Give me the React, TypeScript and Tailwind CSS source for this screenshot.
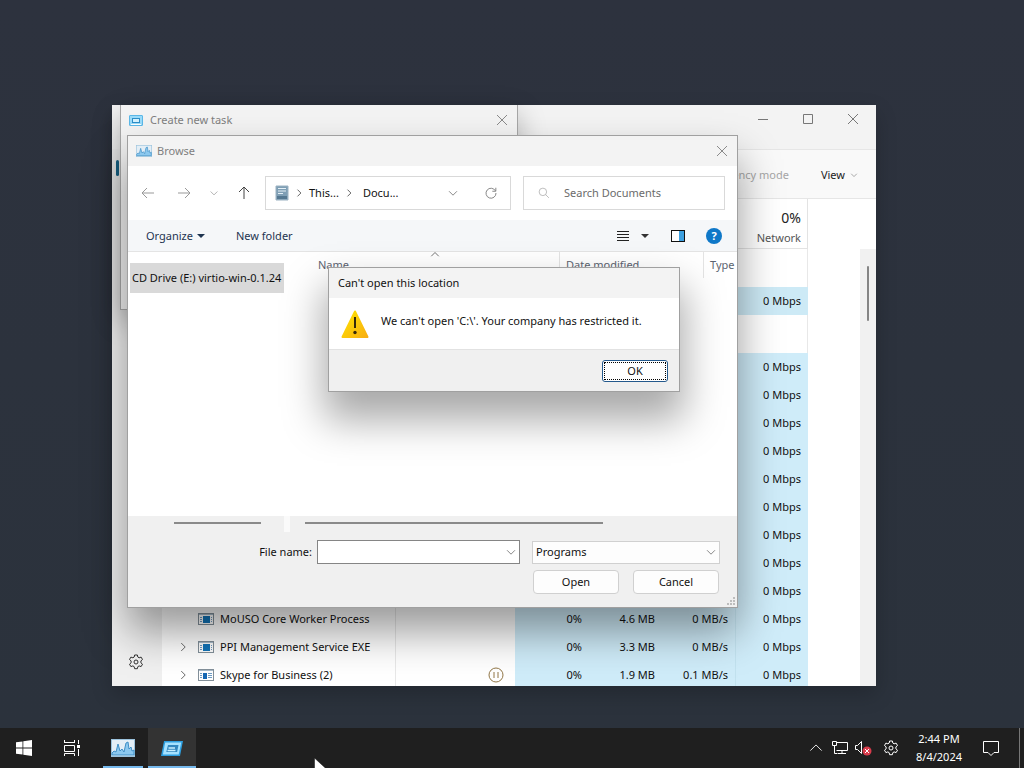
import { ReactNode } from "react";

type Process = {
  name?: string;
  expandable?: boolean;
  small?: boolean;
  paused?: boolean;
  cpu?: string;
  memory?: string;
  disk?: string;
};

const processes: Process[] = [
  {},
  {},
  {},
  {},
  {},
  {},
  {},
  {},
  {},
  { name: "MoUSO Core Worker Process", cpu: "0%", memory: "4.6 MB", disk: "0 MB/s" },
  {
    name: "PPI Management Service EXE",
    expandable: true,
    cpu: "0%",
    memory: "3.3 MB",
    disk: "0 MB/s",
  },
  {
    name: "Skype for Business (2)",
    expandable: true,
    small: true,
    paused: true,
    cpu: "0%",
    memory: "1.9 MB",
    disk: "0.1 MB/s",
  },
];

function Icon({
  d,
  className = "",
  size = 16,
}: {
  d: string;
  className?: string;
  size?: number;
}) {
  return (
    <svg
      width={size}
      height={size}
      viewBox="0 0 16 16"
      fill="none"
      stroke="currentColor"
      className={`shrink-0 ${className}`}
      aria-hidden="true"
    >
      <path d={d} />
    </svg>
  );
}

const closePath = "M3 3l10 10M13 3L3 13";
const downPath = "M3.500 6l4.500 4.500L12.500 6";
const rightPath = "M6 3.500l4.500 4.500L6 12.500";

function GearIcon({ size = 16 }: { size?: number }) {
  return (
    <svg width={size} height={size} viewBox="0 0 16 16" fill="none" stroke="currentColor" aria-hidden="true">
      <path
        d="M6.6 1h2.8l.4 2 1.3.8 2-.7 1.4 2.4-1.6 1.4v1.9l1.6 1.4-1.4 2.4-2-.7-1.3.8-.4 2H6.6l-.4-2-1.3-.8-2 .7-1.4-2.4 1.6-1.4V6.900L1.500 5.500l1.400-2.400 2 .7 1.300-.8z"
        strokeLinejoin="round"
      />
      <circle cx="8" cy="8" r="2" />
    </svg>
  );
}

function RunIcon() {
  return (
    <svg width="22" height="15" viewBox="0 0 22 15" aria-hidden="true">
      <path d="M3 0h19l-3 15H0z" fill="#2d9fe0" />
      <path d="M4.200 1.500h16l-2.500 12H1.900z" fill="#a5e2ff" />
      <path d="M7 4h10.500l-1.400 7H5.300z" fill="#3187bf" />
      <path d="M7.500 7h6.500M6.500 9.500h8" stroke="#c9f0ff" strokeWidth="1.500" />
    </svg>
  );
}

function RunWindowIcon() {
  return (
    <svg width="14" height="11" viewBox="0 0 14 11" aria-hidden="true">
      <rect x=".5" y=".5" width="13" height="10" rx=".5" fill="#9bdcfa" stroke="#5bb8e8" />
      <rect x="3.500" y="3.500" width="7" height="4" fill="#d5f2ff" stroke="#2d8fc8" />
      <path d="M2 9.500h10" stroke="#fff" />
    </svg>
  );
}

function GraphIcon({ width = 16, height = 12 }: { width?: number; height?: number }) {
  return (
    <svg width={width} height={height} viewBox="0 0 24 18" preserveAspectRatio="none" aria-hidden="true">
      <rect x=".5" y=".5" width="23" height="17" fill="#e3eef6" stroke="#9cc3dd" />
      <path
        d="M1 14l2-2 2 1 2-8 2 7 2-2 2 3 2-9 2-1 1 7 2-2 1 4 2-1v5H1z"
        fill="#8cc8ee"
        stroke="#3f8fc6"
      />
    </svg>
  );
}

function ProcessIcon({ small }: { small?: boolean }) {
  return (
    <svg width="16" height="12" viewBox="0 0 16 12" className="shrink-0" aria-hidden="true">
      <rect x=".5" y=".5" width="15" height="11" fill="#fff" stroke="#83909a" />
      <path d="M1 1.500h14" stroke="#a9bccb" />
      {small ? (
        <path d="M5 4h4v6H5z" fill="#1668b4" />
      ) : (
        <path d="M5 3h7v7H5z" fill="#1274b8" />
      )}
      <path d="M2 4.500h2M2 6.500h2M2 8.500h2" stroke="#6e9cc4" />
      <path d={small ? "M10 4.500h4M10 6.500h4M10 8.500h4" : "M13 4.500h1M13 6.500h1M13 8.500h1"} stroke="#6e9cc4" />
    </svg>
  );
}

function TitleBar({ icon, title }: { icon: ReactNode; title: string }) {
  return (
    <header className="flex h-[30px] shrink-0 items-center bg-[#f3f3f3] pr-[7px] pl-2 text-[#7f7f7f]">
      {icon}
      <h2 className="pl-[5px]">{title}</h2>
      <button aria-label={`Close ${title}`} className="ml-auto text-[#8a8a8a]">
        <Icon d={closePath} />
      </button>
    </header>
  );
}

function TaskManager() {
  return (
    <section
      aria-label="Task Manager"
      className="absolute top-[105px] left-[112px] flex h-[581px] w-[764px] flex-col overflow-hidden bg-[#f3f3f3] shadow-[0_8px_20px_rgba(0,0,0,0.2)]"
    >
      <header className="flex h-11 shrink-0 items-start justify-end gap-[29px] pt-[6px] pr-[15px] text-[#777]">
        <button aria-label="Minimize">
          <Icon d="M3 8.500h10" />
        </button>
        <button aria-label="Maximize">
          <Icon d="M3.500 3.500h9v9h-9z" />
        </button>
        <button aria-label="Close">
          <Icon d={closePath} />
        </button>
      </header>
      <div className="flex min-h-0 flex-1">
        <nav className="relative flex w-[50px] shrink-0 flex-col bg-[#f0f0f0] pt-[11px] pb-4">
          <span className="ml-1 h-4 w-[3px] rounded bg-[#17658a]" />
          <button aria-label="Settings" className="mt-auto ml-4 w-4 text-[#333]">
            <GearIcon />
          </button>
        </nav>
        <div className="flex min-w-0 flex-1 flex-col bg-white">
          <div className="flex h-[50px] shrink-0 items-center justify-end gap-8 border-y border-[#e6e6e6] bg-[#f9f9f9] pt-[2px] pr-[17px]">
            <button disabled className="text-[#a6a6a6]">
              Efficiency mode
            </button>
            <button className="flex items-center gap-1 text-[#222]">
              View
              <Icon d={downPath} size={10} className="text-[#777]" />
            </button>
          </div>
          <div className="flex min-h-0 flex-1 overflow-hidden">
            <table className="w-[646px] table-fixed border-separate border-spacing-0 self-start text-right">
              <colgroup>
                <col className="w-[234px]" />
                <col className="w-[119px]" />
                <col className="w-[74px]" />
                <col className="w-[73px]" />
                <col className="w-[73px]" />
                <col className="w-[73px]" />
              </colgroup>
              <thead>
                <tr className="h-[50px]">
                  <td colSpan={5} className="border-b border-[#e3e3e3]" />
                  <th className="border-r border-b border-[#e3e3e3] pt-2 pr-[6px] pb-0 font-normal">
                    <div className="text-sm leading-5 text-[#222]">0%</div>
                    <div className="leading-5 text-[#555]">Network</div>
                  </th>
                </tr>
              </thead>
              <tbody>
                <tr className="h-[38px]">
                  <td colSpan={5} />
                  <td className="border-r border-[#e8e8e8]" />
                </tr>
                <tr className="h-7">
                  <td colSpan={2} />
                  <td colSpan={3} className="bg-[#cdeaf6]" />
                  <td className="bg-[#cdeaf6] pr-[7px]">0 Mbps</td>
                </tr>
                <tr className="h-[38px]">
                  <td colSpan={5} />
                  <td className="border-r border-[#e8e8e8]" />
                </tr>
                {processes.map((process, i) => (
                  <tr key={i} className="h-7">
                    <td className="border-r border-[#e8e8e8] pl-[14px] text-left">
                      <span className="flex items-center">
                        <Icon
                          d={rightPath}
                          size={14}
                          className={process.expandable ? "text-[#555]" : "invisible"}
                        />
                        <span className="flex items-center gap-[6px] pl-2">
                          <ProcessIcon small={process.small} />
                          {process.name}
                        </span>
                      </span>
                    </td>
                    <td className="pr-[11px]">
                      {process.paused && (
                        <svg width="16" height="16" viewBox="0 0 16 16" fill="none" stroke="#927747" className="ml-auto" aria-label="Suspended">
                          <circle cx="8" cy="8" r="7" />
                          <path d="M6 5v6M10 5v6" />
                        </svg>
                      )}
                    </td>
                    <td className="bg-[#cfecf9] pr-[7px]">{process.cpu}</td>
                    <td className="bg-[#cfecf9] pr-[7px]">{process.memory}</td>
                    <td className="bg-[#cfecf9] pr-[7px]">{process.disk}</td>
                    <td className="border-l border-[#c2e2ef] bg-[#cfecf9] pr-[7px]">0 Mbps</td>
                  </tr>
                ))}
              </tbody>
            </table>
            <div className="mt-[50px] ml-auto w-4 bg-[#f1f1f1] pt-[17px]">
              <div className="ml-[7px] h-[55px] w-[2px] rounded bg-[#858585]" />
            </div>
          </div>
        </div>
      </div>
    </section>
  );
}

function CreateTask() {
  return (
    <section
      aria-label="Create new task"
      className="absolute top-[105px] left-[120px] h-[205px] w-[398px] border border-t-0 border-[#a6a6a6] bg-[#f0f0f0] shadow-[0_10px_26px_rgba(0,0,0,0.28)]"
    >
      <TitleBar icon={<span className="pr-[2px]"><RunWindowIcon /></span>} title="Create new task" />
    </section>
  );
}

function BrowseWindow() {
  return (
    <section
      aria-label="Browse"
      className="absolute top-[135px] left-[127px] flex h-[473px] w-[611px] flex-col border border-[#a0a0a0] bg-white shadow-[0_24px_40px_rgba(0,0,0,0.4)]"
    >
      <TitleBar icon={<GraphIcon />} title="Browse" />

      <div className="flex h-[54px] shrink-0 items-center pr-3 pl-3">
        <div className="flex w-[125px] items-center gap-4">
          <button aria-label="Back" className="text-[#999]">
            <Icon d="M14 8H2.500M7 3L2 8l5 5" />
          </button>
          <button aria-label="Forward" className="ml-1 text-[#999]">
            <Icon d="M2 8h11.500M9 3l5 5-5 5" />
          </button>
          <button aria-label="Recent locations" className="text-[#999]">
            <Icon d={downPath} size={12} />
          </button>
          <button aria-label="Up" className="text-[#444]">
            <Icon d="M8 14V2.500M3 7l5-5 5 5" />
          </button>
        </div>
        <div className="flex h-[34px] flex-1 items-center border border-[#d9d9d9] pr-3 pl-[9px]">
          <svg width="14" height="16" viewBox="0 0 14 16" aria-hidden="true">
            <path d="M1 1h12v14H1z" fill="#7f9fb5" stroke="#9cb2c2" />
            <path d="M3 3.500h8M3 6h8M3 8.500h5" stroke="#e5f0f7" />
            <path d="M2 11h10v3H2z" fill="#557891" />
          </svg>
          <Icon d={rightPath} size={12} className="ml-1 text-[#333]" />
          <button className="pl-1">This...</button>
          <Icon d={rightPath} size={12} className="ml-1 text-[#333]" />
          <button className="pl-2">Docu...</button>
          <button aria-label="Previous locations" className="mr-6 ml-auto text-[#777]">
            <Icon d={downPath} size={14} />
          </button>
          <button aria-label="Refresh" className="text-[#777]">
            <Icon d="M13 5.500A5.700 5.700 0 1 0 13.700 8M13.500 2v4H9.500" size={14} />
          </button>
        </div>
        <label className="ml-3 flex h-[34px] w-[202px] items-center gap-[14px] border border-[#d9d9d9] px-[14px] text-[#aaa]">
          <Icon d="M10 10l4.500 4.500M11.500 6.500a5 5 0 1 1-10 0 5 5 0 0 1 10 0z" size={12} />
          <input
            aria-label="Search Documents"
            placeholder="Search Documents"
            className="w-full min-w-0 bg-transparent outline-none placeholder:text-[#6b6b6b]"
          />
        </label>
      </div>

      <div className="flex h-8 shrink-0 items-center border-b border-[#e4e4e4] bg-[#f5f7f9] pr-[15px] pl-[18px] text-[#1e3450]">
        <button className="flex items-center gap-1">
          Organize
          <span className="border-x-4 border-t-4 border-x-transparent border-t-[#1e3450]" />
        </button>
        <button className="pl-[31px]">New folder</button>
        <div className="ml-auto flex items-center">
          <button aria-label="Change view" className="flex items-center gap-3">
            <svg width="12" height="12" viewBox="0 0 12 12" stroke="#222" aria-hidden="true">
              <path d="M0 1.500h12M0 4.500h12M0 7.500h12M0 10.500h12" />
            </svg>
            <span className="border-x-4 border-t-4 border-x-transparent border-t-[#333]" />
          </button>
          <button aria-label="Preview pane" className="ml-[22px]">
            <svg width="14" height="12" viewBox="0 0 14 12" aria-hidden="true">
              <rect x=".5" y=".5" width="13" height="11" fill="#fff" stroke="#111" />
              <path d="M8 1h5v10H8z" fill="#3da0e0" />
            </svg>
          </button>
          <button
            aria-label="Help"
            className="ml-[21px] size-4 rounded-full bg-[#0f78c8] text-center leading-4 font-bold text-white"
          >
            ?
          </button>
        </div>
      </div>

      <div className="flex min-h-0 flex-1">
        <div className="w-[156px] shrink-0 pt-[11px] pl-[2px]">
          <div className="flex h-[30px] items-center overflow-hidden bg-[#d9d9d9] pl-[2px] whitespace-nowrap">
            CD Drive (E:) virtio-win-0.1.24
          </div>
        </div>
        <div className="relative flex h-[26px] min-w-0 flex-1 items-center pl-[34px] text-[#5c6370]">
          <span className="w-[241px]">Name</span>
          <span className="flex h-full w-[144px] items-center border-l border-[#e4e4e4] pl-[6px]">
            Date modified
          </span>
          <span className="flex h-full items-center border-l border-[#e4e4e4] pl-[6px]">Type</span>
          <Icon d="M3 11l5-5 5 5" size={12} className="absolute -top-1 left-[145px] text-[#444]" />
        </div>
      </div>

      <div className="flex h-4 shrink-0 bg-[#f0f0f0] pl-[2px]">
        <div className="w-[154px] pt-[6px] pl-11">
          <div className="h-[2px] w-[87px] bg-[#8a8a8a]" />
        </div>
        <div className="w-[6px] bg-[#fafafa]" />
        <div className="pt-[6px] pl-[15px]">
          <div className="h-[2px] w-[298px] bg-[#8a8a8a]" />
        </div>
      </div>

      <form className="relative flex h-[75px] shrink-0 flex-col bg-[#f0f0f0] pt-2 pr-[17px]">
        <div className="flex items-center">
          <label htmlFor="file-name" className="ml-auto pr-[5px]">
            File name:
          </label>
          <div className="flex h-6 w-[203px] items-center border border-[#858585] bg-white pr-px">
            <input id="file-name" className="min-w-0 flex-1 px-1 outline-none" />
            <Icon d={downPath} size={14} className="text-[#777]" />
          </div>
          <div className="relative ml-3">
            <select
              aria-label="File type"
              className="block h-[23px] w-[188px] appearance-none border border-[#d0d0d0] bg-[#fdfdfd] pl-[3px]"
            >
              <option>Programs</option>
            </select>
            <Icon d={downPath} size={14} className="pointer-events-none absolute top-1 right-[2px] text-[#777]" />
          </div>
        </div>
        <div className="flex justify-end gap-[14px] pt-[6px] pr-px">
          <button type="button" className="h-6 w-[86px] rounded-sm border border-[#d0d0d0] bg-[#fdfdfd]">
            Open
          </button>
          <button type="button" className="h-6 w-[86px] rounded-sm border border-[#d0d0d0] bg-[#fdfdfd]">
            Cancel
          </button>
        </div>
        <svg width="10" height="10" viewBox="0 0 10 10" fill="#bdbdbd" className="absolute right-[1px] bottom-[1px]" aria-hidden="true">
          <path d="M7 1h2v2H7zM7 4h2v2H7zM7 7h2v2H7zM4 4h2v2H4zM4 7h2v2H4zM1 7h2v2H1z" />
        </svg>
      </form>
    </section>
  );
}

function ErrorDialog() {
  return (
    <section
      role="alertdialog"
      aria-labelledby="error-title"
      className="absolute top-[267px] left-[328px] flex w-[352px] flex-col border border-[#a0a0a0] bg-white shadow-[0_24px_38px_4px_rgba(0,0,0,0.34)]"
    >
      <h2 id="error-title" className="flex h-[30px] items-center bg-[#f3f3f3] pl-[9px]">
        Can't open this location
      </h2>
      <div className="flex h-[51px] items-start pt-[11px] pl-3">
        <svg width="28" height="30" viewBox="0 0 28 30" aria-hidden="true">
          <defs>
            <linearGradient id="warn" x1="0" y1="0" x2="1" y2="1">
              <stop offset="0" stopColor="#ffe600" />
              <stop offset="1" stopColor="#f8ae12" />
            </linearGradient>
          </defs>
          <path d="M14 2.500L26.500 28h-25z" fill="url(#warn)" stroke="url(#warn)" strokeWidth="2" strokeLinejoin="round" />
          <path d="M14 8v11" stroke="#35290b" strokeWidth="2" />
          <circle cx="14" cy="23.500" r="1.700" fill="#35290b" />
        </svg>
        <p className="pt-1 pl-3">We can't open 'C:\'. Your company has restricted it.</p>
      </div>
      <div className="flex h-[42px] items-start justify-end border-t border-[#e2e2e2] bg-[#f0f0f0] pt-[10px] pr-[11px]">
        <button className="h-[22px] w-[66px] rounded-[3px] border border-[#24598c] bg-white p-px">
          <span className="flex h-full items-center justify-center border border-dotted border-black">OK</span>
        </button>
      </div>
    </section>
  );
}

function Taskbar() {
  return (
    <footer className="relative flex h-10 shrink-0 items-center bg-[#1f1f1f] text-white">
      <button aria-label="Start" className="flex w-12 justify-center">
        <svg width="16" height="16" viewBox="0 0 16 16" fill="currentColor" aria-hidden="true">
          <path d="M0 2.300l6.500-.9v6.200H0zM7.300 1.300L16 0v7.600H7.300zM0 8.400h6.500v6.200L0 13.700zM7.300 8.400H16V16l-8.700-1.300z" />
        </svg>
      </button>
      <button aria-label="Task View" className="flex w-12 justify-center">
        <svg width="16" height="16" viewBox="0 0 16 16" fill="none" stroke="currentColor" aria-hidden="true">
          <path d="M.5 0v3M.5 2.500h10M10.500 0v3M.5 5.500h10v6H.5zM.5 16v-2.500h10V16M14.500 0v4M14.500 9v7" />
          <path d="M13 5h3v3h-3z" fill="currentColor" stroke="none" />
        </svg>
      </button>
      <button
        aria-label="Task Manager"
        className="ml-[7px] flex h-full w-10 items-center justify-center border-t-2 border-b-2 border-t-transparent border-b-[#76b9ed]"
      >
        <GraphIcon width={24} height={18} />
      </button>
      <button
        aria-label="Create new task"
        className="ml-[5px] flex h-full w-12 items-center justify-center border-t-2 border-b-2 border-t-[#333] border-b-[#76b9ed] bg-[#333]"
      >
        <RunIcon />
      </button>

      <div className="ml-auto flex h-full items-center">
        <button aria-label="Show hidden icons">
          <Icon d="M1.500 11L8 4.500l6.500 6.500" size={14} />
        </button>
        <svg width="18" height="16" viewBox="0 0 18 16" fill="none" stroke="currentColor" className="ml-2" aria-label="Network">
          <path d="M5.500 2.500h11v8h-11M1.500 1.500h4v4h-4zM3.500 5.500v8h3M11 10.500v3M7 13.500h8" />
        </svg>
        <svg width="18" height="16" viewBox="0 0 18 16" className="ml-[6px]" aria-label="Volume muted">
          <path d="M.5 5.500h2l4-4v12l-4-4h-2z" fill="none" stroke="currentColor" />
          <circle cx="12" cy="11" r="4.500" fill="#d83b4b" />
          <path d="M10 9l4 4M14 9l-4 4" stroke="#fff" />
        </svg>
        <span className="ml-[10px]">
          <GearIcon />
        </span>
        <div className="w-20 text-center leading-[18px]">
          <div>2:44 PM</div>
          <div>8/4/2024</div>
        </div>
        <button aria-label="Notifications" className="ml-1 pr-5">
          <svg width="16" height="16" viewBox="0 0 16 16" fill="none" stroke="currentColor" aria-hidden="true">
            <path d="M.5 1.500h15v11H11L8 15.500 5 12.500H.5z" />
          </svg>
        </button>
        <span className="mr-1 h-full border-l border-[#777]" />
      </div>

      <svg width="14" height="22" viewBox="0 0 14 22" className="absolute top-[29px] left-[314px]" aria-hidden="true">
        <path d="M.5 1v17l4-4 3 7 3-1.500-3-6.500h6z" fill="#fff" stroke="#111" strokeWidth=".5" />
      </svg>
    </footer>
  );
}

function App() {
  return (
    <div className="flex h-screen flex-col overflow-hidden bg-[#2d323e] font-['Noto_Sans','Open_Sans',sans-serif] text-[11px] leading-4 text-[#111]">
      <main className="relative min-h-0 flex-1 overflow-hidden bg-linear-to-b from-[#2d323e] to-[#2b323c]">
        <TaskManager />
        <CreateTask />
        <BrowseWindow />
        <ErrorDialog />
      </main>
      <Taskbar />
    </div>
  );
}

export default App;
